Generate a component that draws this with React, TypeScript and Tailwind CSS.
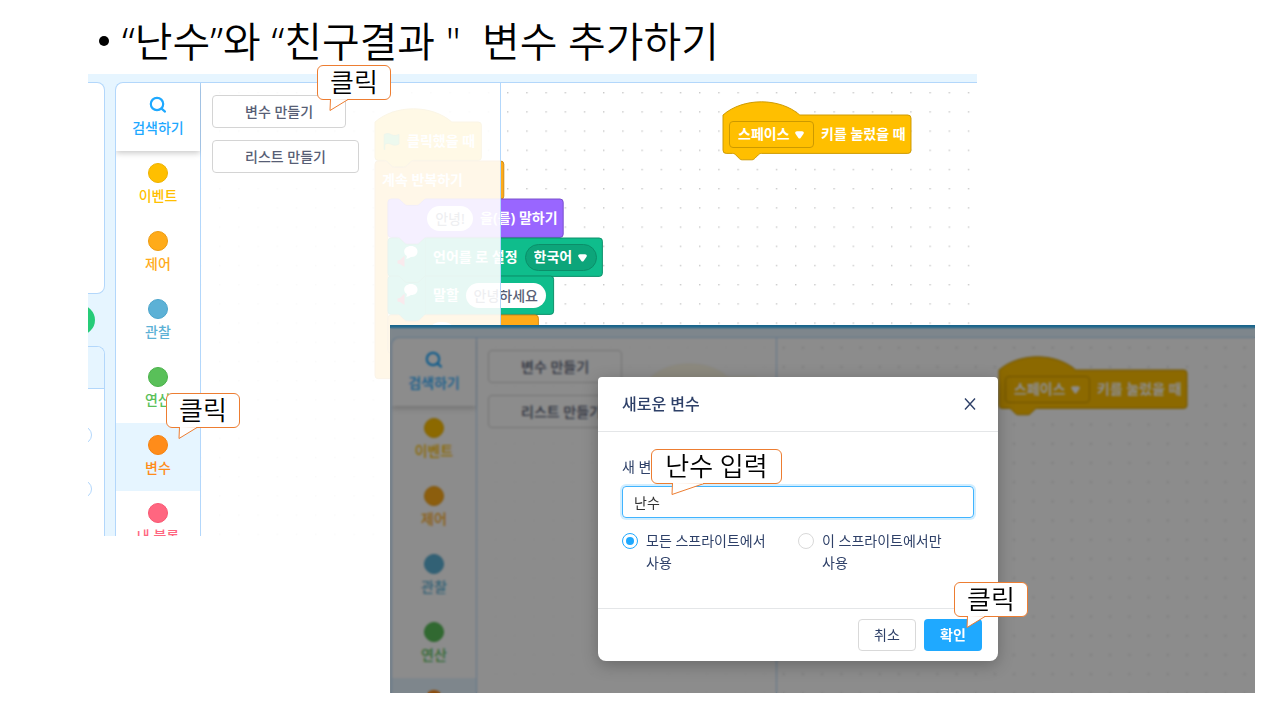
import { useState } from 'react';
import type { ReactNode } from 'react';
import clsx from 'clsx';

const categories = [
  { name: '이벤트', dot: 'bg-[#ffbf00] border-[#eeb200]', text: 'text-[#ffbf00]' },
  { name: '제어', dot: 'bg-[#ffab19] border-[#ee9b0f]', text: 'text-[#ffab19]' },
  { name: '관찰', dot: 'bg-[#5cb1d6] border-[#4ba5cc]', text: 'text-[#5cb1d6]' },
  { name: '연산', dot: 'bg-[#59c059] border-[#4ab24a]', text: 'text-[#59c059]' },
  { name: '변수', dot: 'bg-[#ff8c1a] border-[#f6820f]', text: 'text-[#ff8c1a]', active: true },
  { name: '내 블록', dot: 'bg-[#ff6680] border-[#f85873]', text: 'text-[#ff6680]' },
];

// Block outlines, in block units (drawn at 0.8)
const NOTCH_RIGHT = 'c 2,0 3,1 4,2 l 4,4 c 1,1 2,2 4,2 h 12 c 2,0 3,-1 4,-2 l 4,-4 c 1,-1 2,-2 4,-2';
const NOTCH_LEFT = 'c -2,0 -3,1 -4,2 l -4,4 c -1,1 -2,2 -4,2 h -12 c -2,0 -3,-1 -4,-2 l -4,-4 c -1,-1 -2,-2 -4,-2';

const bottomEdge = `a 4,4 0 0 1 -4,4 H 48 ${NOTCH_LEFT} H 4 a 4,4 0 0 1 -4,-4 z`;
const hatPath = (w: number) => `M 0,0 c 25,-22 71,-22 96,0 H ${w - 4} a 4,4 0 0 1 4,4 v 40 ${bottomEdge}`;
const stackPath = (w: number) => `M 0,4 a 4,4 0 0 1 4,-4 h 8 ${NOTCH_RIGHT} H ${w - 4} a 4,4 0 0 1 4,4 v 40 ${bottomEdge}`;
const loopPath = (w: number, inner: number) =>
  `M 0,4 a 4,4 0 0 1 4,-4 h 8 ${NOTCH_RIGHT} H ${w - 4} a 4,4 0 0 1 4,4 v 40 a 4,4 0 0 1 -4,4 H 64 ${NOTCH_LEFT} H 20 ` +
  `a 4,4 0 0 0 -4,4 v ${inner - 8} a 4,4 0 0 0 4,4 H ${w - 4} a 4,4 0 0 1 4,4 v 24 a 4,4 0 0 1 -4,4 H 4 a 4,4 0 0 1 -4,-4 z`;

const Block = ({ d, fill, stroke, className, children }: {
  d: string; fill: string; stroke: string; className: string; children?: ReactNode;
}) => (
  <div className={clsx('absolute flex h-[38px] items-center gap-[7px] whitespace-nowrap font-bold text-white', className)}>
    <svg className="absolute left-0 top-0 h-px w-px overflow-visible" aria-hidden="true">
      <path d={d} fill={fill} stroke={stroke} strokeWidth="1.2" transform="scale(0.8)" />
    </svg>
    {children}
  </div>
);

const BlockSelect = ({ label, value, className }: { label: string; value: string; className: string }) => (
  <span className="relative flex">
    <select aria-label={label} className={clsx('h-[27px] appearance-none border pl-2 font-bold text-white', className)}>
      <option>{value}</option>
    </select>
    <svg className="pointer-events-none absolute right-[10px] top-[10px]" width="9" height="8" viewBox="0 0 9 8" aria-hidden="true">
      <path d="M2 0.2 H7 C8.8 0.2 9.3 1.8 8.4 3 L5.6 7 C5 7.8 4 7.8 3.4 7 L0.6 3 C-0.3 1.8 0.2 0.2 2 0.2 Z" fill="#fff" />
    </svg>
  </span>
);

const SpeechIcon = () => (
  <span className="relative flex h-full w-[30px] items-center border-r border-[#0da57a]">
    <svg width="22" height="24" viewBox="0 0 22 24" aria-hidden="true">
      <path d="M1.5 15.5 L4 15 L8.5 10.5 V22 L4 19 L1.5 18.5 Z" fill="#c02a48" />
      <path d="M15 1 C19 1 21.5 3.4 21.5 6.5 C21.5 9.8 19 12 15.4 12 C14 12.2 12 14 10 13.6 C11 12.8 11 11.6 10.6 10.8 C9 9.8 8.2 8.2 8.2 6.5 C8.2 3.4 11 1 15 1 Z" fill="#fff" />
    </svg>
  </span>
);

const Workspace = () => (
  <div className="relative min-w-0 flex-1 overflow-hidden bg-white text-sm">
    <svg className="absolute inset-0 h-full w-full" aria-hidden="true">
      <defs>
        <pattern id="grid" x="18" y="9" width="19.2" height="19.2" patternUnits="userSpaceOnUse">
          <rect x="0" y="0" width="1.4" height="1.4" fill="#c8c8c8" />
        </pattern>
      </defs>
      <rect width="100%" height="100%" fill="url(#grid)" />
    </svg>

    {/* Flag script */}
    <Block d={hatPath(133)} fill="#ffbf00" stroke="#cc9900" className="left-[174px] top-[39px] pl-2">
      <svg className="relative" width="17" height="17" viewBox="0 0 17 17" aria-hidden="true">
        <path d="M1.2 16.5 V1.5 C4 -0.2 6.4 0.6 8.6 1.8 C11 3 13.4 2.6 16 1.4 V11 C13.4 12.4 11 12.6 8.6 11.4 C6.4 10.2 4 10 1.8 11.4 V16.5 Z" fill="#4cbf56" stroke="#45993d" strokeWidth="0.8" />
      </svg>
      <span className="relative">클릭했을 때</span>
    </Block>
    <Block d={loopPath(161, 192)} fill="#ffab19" stroke="#cf8b17" className="left-[174px] top-[78px] pl-[7px]">
      <span className="relative">계속 반복하기</span>
    </Block>
    <Block d={stackPath(219)} fill="#9966ff" stroke="#774dcb" className="left-[187px] top-[116px] pl-[39px]">
      <input aria-label="말할 내용" defaultValue="안녕!" className="relative h-[25px] w-[46px] rounded-full bg-white text-center font-medium text-[#575e75]" />
      <span className="relative">을(를) 말하기</span>
    </Block>
    <Block d={stackPath(268)} fill="#0fbd8c" stroke="#0b8e69" className="left-[187px] top-[155px] pl-2">
      <SpeechIcon />
      <span className="relative">언어를 로 설정</span>
      <BlockSelect label="언어" value="한국어" className="w-[72px] rounded-full border-[#0b8e69] bg-[#0da57a]" />
    </Block>
    <Block d={stackPath(207)} fill="#0fbd8c" stroke="#0b8e69" className="left-[187px] top-[193px] pl-2">
      <SpeechIcon />
      <span className="relative">말할</span>
      <input aria-label="읽을 문장" defaultValue="안녕하세요" className="relative h-[25px] w-20 rounded-full bg-white text-center font-medium text-[#575e75]" />
    </Block>
    <Block d={stackPath(188)} fill="#ffab19" stroke="#cf8b17" className="left-[187px] top-[232px] pl-10">
      <span className="relative h-[25px] w-7 rounded-full bg-white" />
    </Block>

    {/* Key script */}
    <Block d={hatPath(235)} fill="#ffbf00" stroke="#cc9900" className="left-[522px] top-[32px] pl-[6px]">
      <BlockSelect label="키" value="스페이스" className="w-[85px] rounded border-[#cc9900] bg-[#ffbf00]" />
      <span className="relative">키를 눌렀을 때</span>
    </Block>

    {/* Flyout */}
    <div className="absolute inset-y-0 left-0 flex w-[300px] flex-col items-start gap-3 border-r border-[#b3d7fb] bg-white/90 px-[11px] pt-3 font-medium text-[#575e75]">
      <button className="h-[33px] rounded border border-[#d4d4d4] bg-white px-8">변수 만들기</button>
      <button className="h-[33px] rounded border border-[#d4d4d4] bg-white px-8">리스트 만들기</button>
    </div>
  </div>
);

const Editor = () => (
  <div className="flex min-w-0 flex-1 overflow-hidden rounded-tl-lg border-l border-t border-[#b3d7fb] bg-white">
    <nav className="w-[85px] shrink-0 border-r border-[#b3d7fb] text-sm font-medium leading-[18px]">
      <button className="relative flex h-[68px] w-full flex-col items-center gap-1 pt-3 text-[#1fa9ff] shadow-[0_2px_6px_rgba(0,0,0,0.22)]">
        <svg width="20" height="20" viewBox="0 0 20 20" fill="none" stroke="currentColor" strokeWidth="2.2" strokeLinecap="round" aria-hidden="true">
          <circle cx="9" cy="9" r="6.2" />
          <path d="M13.6 13.6 L17 16.6" />
        </svg>
        검색하기
      </button>
      {categories.map((c) => (
        <button key={c.name} className={clsx('flex h-[68px] w-full flex-col items-center gap-1 pt-3', c.text, c.active && 'bg-[#e6f5ff]')}>
          <span className={clsx('h-5 w-5 rounded-full border', c.dot)} />
          {c.name}
        </button>
      ))}
    </nav>
    <Workspace />
  </div>
);

// Right edge of the stage and the sprite panel
const StageEdge = () => (
  <div className="flex w-[17px] shrink-0 flex-col overflow-hidden">
    <div className="h-[212px] rounded-br-lg rounded-tr-lg border-b border-r border-t border-[#b3d7fb] bg-white" />
    <div className="flex h-[52px] items-center justify-end pr-[10px]">
      <span className="h-[30px] w-[30px] shrink-0 rounded-full bg-[#26cc78]" />
    </div>
    <div className="flex flex-1 flex-col overflow-hidden rounded-tr-lg border-r border-t border-[#b3d7fb] bg-white">
      <div className="h-[42px] border-b border-[#b3d7fb] bg-[#e6f5ff]" />
      <div className="flex flex-col items-end gap-9 pr-3 pt-[37px]">
        <span className="h-[18px] w-8 rounded-full border border-[#b3d7fb]" />
        <span className="h-[18px] w-8 rounded-full border border-[#b3d7fb]" />
      </div>
    </div>
  </div>
);

const NewVariableDialog = () => {
  const [name, setName] = useState('난수');
  const [scope, setScope] = useState('all');

  const options = [
    { id: 'all', label: '모든 스프라이트에서 사용' },
    { id: 'local', label: '이 스프라이트에서만 사용' },
  ];

  return (
    <div role="dialog" aria-label="새로운 변수" className="absolute left-[208px] top-[52px] w-[400px] rounded-b-lg rounded-t bg-white text-sm leading-[22px] text-[#2e4068] shadow-[0_4px_16px_rgba(0,0,0,0.25)]">
      <div className="flex h-[55px] items-center justify-between border-b border-[#e4e6e8] px-6">
        <h2 className="text-base font-medium">새로운 변수</h2>
        <button aria-label="닫기" className="-mr-0.5">
          <svg width="12" height="12" viewBox="0 0 12 12" stroke="currentColor" strokeWidth="1.4" aria-hidden="true">
            <path d="M1 0.5 L11 11.5 M11 0.5 L1 11.5" />
          </svg>
        </button>
      </div>

      <div className="px-6 pb-[34px] pt-6">
        <label htmlFor="variable-name" className="block">새 변수 이름:</label>
        <input
          id="variable-name"
          value={name}
          onChange={(e) => setName(e.target.value)}
          className="mt-2 block h-8 w-full rounded border border-[#40b4ff] px-[11px] text-[#333] outline-none ring-2 ring-[#1fa9ff]/20"
        />
        <div className="mt-3 grid grid-cols-2">
          {options.map((o) => (
            <label key={o.id} className="flex items-start gap-2 break-keep pr-7">
              <input
                type="radio"
                name="scope"
                checked={scope === o.id}
                onChange={() => setScope(o.id)}
                className="mt-[3px] h-4 w-4 shrink-0 appearance-none rounded-full border border-[#d9d9d9] bg-white bg-clip-content p-[3px] checked:border-[#1fa9ff] checked:bg-[#1fa9ff]"
              />
              {o.label}
            </label>
          ))}
        </div>
      </div>

      <div className="flex justify-end gap-2 border-t border-[#e4e6e8] px-4 py-[10px]">
        <button className="h-8 w-[58px] rounded border border-[#d9d9d9] bg-white">취소</button>
        <button className="h-8 w-[58px] rounded bg-[#1fa9ff] font-bold text-white">확인</button>
      </div>
    </div>
  );
};

const Callout = ({ text, className, tail = 18 }: { text: string; className: string; tail?: number }) => (
  <div className={clsx('absolute flex h-[35px] items-center justify-center rounded-md border border-[#ed7d31] bg-white pb-0.5 text-[26px] font-[350] leading-none text-black', className)}>
    {text}
    <svg className="absolute top-[33px] h-3 w-9 overflow-visible" viewBox="0 0 36 12" aria-hidden="true">
      <path d={`M 0.5,0 L 0,11.5 L ${tail},0.5`} fill="#fff" stroke="#ed7d31" />
      <path d={`M 1,-1 H ${tail - 1} V 0.6 H 1 Z`} fill="#fff" />
    </svg>
  </div>
);

export default function App() {
  return (
    <main className="relative min-h-screen overflow-hidden bg-white font-['Noto_Sans','Noto_Sans_CJK_KR',sans-serif]">
      <h1 className="flex h-[74px] items-center gap-[13px] whitespace-pre pl-[99px] pt-2 text-[41px] font-[350] leading-none text-black">
        <span className="h-[10px] w-[10px] rounded-full bg-black" />
        {'“난수”와 “친구결과 "  변수 추가하기'}
      </h1>

      <section className="ml-[88px] mr-[303px] flex h-[462px] gap-[10px] bg-[#e6f5ff] pt-2">
        <StageEdge />
        <Editor />
      </section>

      {/* Same editor with the dialog open */}
      <section className="absolute left-[390px] right-[25px] top-[325px] flex h-[368px] flex-col overflow-hidden">
        <div className="h-[3px] shrink-0 bg-[#2fb8ff]" />
        <div className="flex min-h-0 flex-1 bg-[#e6f5ff] pl-px pt-[9px]">
          <Editor />
        </div>
        <div className="absolute inset-0 bg-black/45 backdrop-blur-[1px]" />
        <NewVariableDialog />
      </section>

      <Callout text="클릭" className="left-[317px] top-[65px] w-[74px] [&>svg]:left-3" />
      <Callout text="클릭" className="left-[166px] top-[393px] w-[74px] [&>svg]:left-3" />
      <Callout text="난수 입력" tail={32} className="left-[651px] top-[449px] w-[131px] [&>svg]:left-5" />
      <Callout text="클릭" className="left-[954px] top-[582px] w-[74px] [&>svg]:left-3" />
    </main>
  );
}
